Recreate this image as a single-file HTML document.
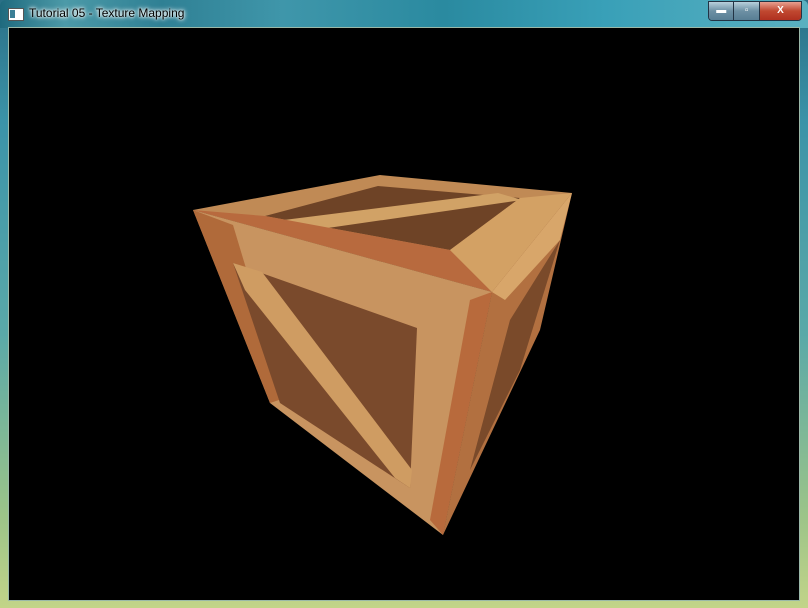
<!DOCTYPE html>
<html><head><meta charset="utf-8"><style>
html,body{margin:0;padding:0;width:808px;height:608px;overflow:hidden;background:#000}
.win{position:absolute;left:0;top:0;width:808px;height:608px;
background:linear-gradient(180deg,#2a6f86 0%,#3b93a8 20%,#5aa9a8 55%,#9cc488 85%,#c2d488 100%);}
.tb{position:absolute;left:0;top:0;width:808px;height:28px;
background:linear-gradient(90deg,#1f6a7e 0%,#4c9aa8 8%,#2f8094 20%,#3f96aa 35%,#2a8aa0 55%,#39a0b8 75%,#5ab0c0 100%);border-radius:6px 6px 0 0}
.title{position:absolute;left:29px;top:6px;font:12px "Liberation Sans",sans-serif;color:#000;text-shadow:0 0 6px #fff,0 0 4px #fff,0 0 2px #fff}
.ico{position:absolute;left:8px;top:8px;width:14px;height:11px;background:#fff;border:1px solid #555}
.ico:after{content:"";position:absolute;left:1px;top:1px;width:5px;height:8px;background:#3a7f96}
.client{position:absolute;left:8px;top:27px;width:792px;height:574px;background:#000;border:1px solid #9ab8a8;box-sizing:border-box}
.btns{position:absolute;left:708px;top:1px;width:92px;height:18px;border:1px solid #234;border-radius:0 0 4px 4px;overflow:hidden;display:flex}
.b{height:18px;background:linear-gradient(#b8d0dc,#6d90a4 50%,#587e94);border-right:1px solid #234;color:#fff;font:bold 10px "Liberation Sans",sans-serif;text-align:center;line-height:18px}
.x{background:linear-gradient(#e8a090,#c04830 50%,#b03020);border:none}
</style></head><body>
<div class="win">
<div class="tb"></div>
<div class="ico"></div>
<div class="title">Tutorial 05 - Texture Mapping</div>
<div class="btns"><div class="b" style="width:25px">▬</div><div class="b" style="width:25px">▫</div><div class="b x" style="width:42px">X</div></div>
<div class="client"></div>
<svg style="position:absolute;left:0;top:0" width="808" height="608">
<!-- top face -->
<polygon points="193,210 380,175 572,193 492,292" fill="#c08a55"/>
<polygon points="265,216 378,186 520,198 450,250" fill="#6e4326"/>
<polygon points="268,222 300,232 522,200 498,193" fill="#d1a266"/>
<polygon points="268,222 300,232 310,230 276,220" fill="#e0b478"/>
<polygon points="193,210 265,216 450,250 492,292" fill="#b86a3e"/>
<polygon points="450,250 520,198 572,193 492,292" fill="#d3a164"/>
<!-- right face -->
<polygon points="492,292 572,193 540,330 443,535" fill="#b27040"/>
<polygon points="510,320 560,240 520,370 470,470" fill="#7a4a2a"/>
<polygon points="492,292 572,193 560,240 505,300" fill="#d8a66a"/>
<!-- front face -->
<polygon points="193,210 492,292 443,535 270,403" fill="#c89460"/>
<polygon points="193,210 233,225 285,398 270,403" fill="#b06a3a"/>
<polygon points="233,263 417,328 410,488 280,403" fill="#7a4a2c"/>
<polygon points="233,263 262,272 412,470 410,488 395,478 245,290" fill="#cf9c62"/>
<polygon points="470,300 492,292 443,535 430,520" fill="#b86a3c"/>
</svg>
</div>
</body></html>
